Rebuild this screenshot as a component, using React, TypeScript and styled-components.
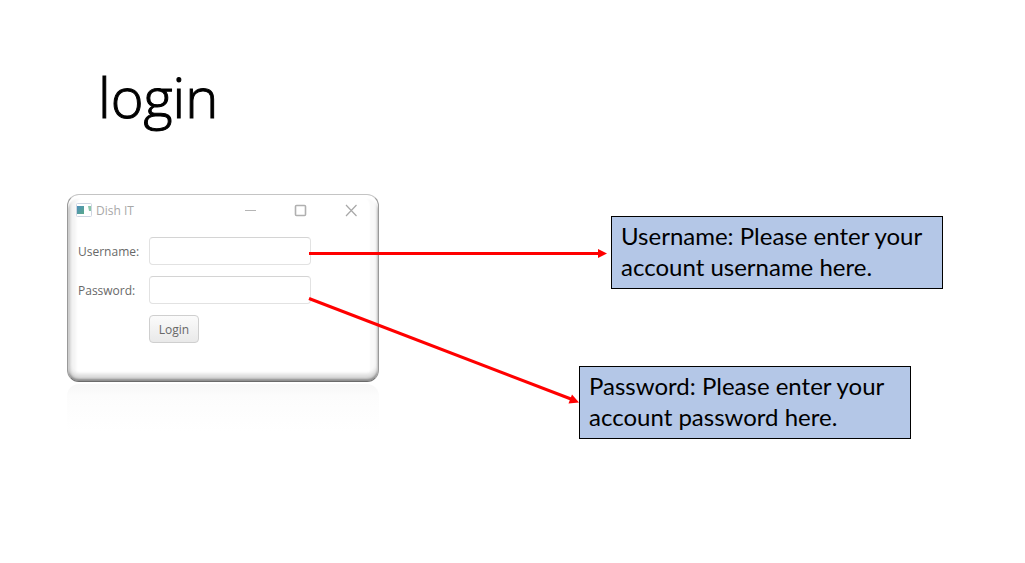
import React from "react";
import styled, { createGlobalStyle } from "styled-components";

const GlobalStyle = createGlobalStyle`
  *, *::before, *::after { box-sizing: border-box; }
  body { margin: 0; background: #fff; color: #000; }
`;

const Slide = styled.main`
  min-height: 100vh;
  padding: 56px 67px 0;
  background: #fff;
`;

const Title = styled.h1`
  margin: 0 0 58px;
  padding-left: 31px;
  font: 300 56px/80px "Open Sans", "Noto Sans", sans-serif;
  -webkit-text-stroke: 1px #000;
`;

const Scene = styled.section`
  position: relative;
  display: flex;
  align-items: flex-start;
  gap: 200px;
`;

const Preview = styled.div`
  flex: none;
  width: 312px;
`;

const AppWindow = styled.div`
  height: 188px;
  border: 1px solid;
  border-color: #c4c4c4 #999 #6b6b6b #999;
  border-radius: 12px;
  background: #fff;
  font-family: "Open Sans", "Noto Sans", sans-serif;
  box-shadow:
    inset 0 4px 2px #fff,
    inset 0 -2px 2px #8e8e8e,
    inset 0 -5px 4px #cfcfcf,
    inset 2px 0 3px #c4c4c4,
    inset -1px 0 1px #c0c0c0,
    inset 0 -8px 3px #f0f0f0,
    inset 8px 0 3px #f4f4f4,
    inset -8px 0 2px #f9f9f9;
`;

const TitleBar = styled.header`
  display: flex;
  align-items: center;
  height: 30px;
  padding: 0 20px 0 8px;
  color: #a8a8a8;
  font-size: 12px;
`;

const WindowName = styled.span`
  flex: 1;
  padding-left: 3px;
`;

const WindowControls = styled.div`
  display: flex;
  gap: 36px;
`;

const WindowButton = styled.button`
  display: flex;
  width: 14px;
  height: 14px;
  padding: 0;
  border: 0;
  background: none;
`;

const LoginForm = styled.form`
  display: grid;
  grid-template-columns: 71px 162px;
  grid-auto-rows: 28px;
  row-gap: 11px;
  align-items: center;
  padding: 12px 0 0 10px;
`;

const Label = styled.label`
  color: #686868;
  font-size: 12px;
`;

const Field = styled.input`
  width: 100%;
  height: 28px;
  padding: 0 8px;
  border: 1px solid #e2e2e2;
  border-top-color: #d4d4d4;
  border-radius: 4px;
  outline: 0;
  background: #fff;
  font: inherit;
`;

const LoginButton = styled.button`
  grid-column: 2;
  justify-self: start;
  width: 50px;
  height: 28px;
  padding: 0;
  border: 1px solid #cfcfcf;
  border-radius: 4px;
  background: linear-gradient(#fbfbfb, #e9e9e9);
  color: #686868;
  font: 12px "Open Sans", "Noto Sans", sans-serif;
`;

const Reflection = styled.div`
  height: 48px;
  margin-top: 2px;
  border-radius: 12px 12px 0 0;
  background: linear-gradient(#f7f7f7, #fcfcfc 12px, #fff);
`;

const Callouts = styled.div`
  display: flex;
  flex-direction: column;
  gap: 77px;
  padding-top: 22px;
`;

const Callout = styled.p<{ $indent?: boolean }>`
  width: 332px;
  margin: 0 0 0 ${({ $indent }) => ($indent ? "32px" : "0")};
  padding: 3px 9px 6px;
  border: 1px solid #000;
  background: #b4c7e7;
  font: 24px/31px Lato, "Open Sans", sans-serif;
`;

const Arrows = styled.svg`
  position: absolute;
  top: 0;
  left: 0;
  pointer-events: none;
`;

export default function App() {
  return (
    <>
      <GlobalStyle />
      <Slide>
        <Title>login</Title>
        <Scene>
          <Preview>
            <AppWindow>
              <TitleBar>
                <svg width="17" height="14" viewBox="0 0 17 14" aria-hidden="true">
                  <defs>
                    <linearGradient id="app-mark" x2="1" y2="1">
                      <stop stopColor="#4f8fbb" />
                      <stop offset="1" stopColor="#58a98a" />
                    </linearGradient>
                  </defs>
                  <rect x=".5" y=".5" width="15" height="13" rx="1" fill="#fff" stroke="#cdd5e2" />
                  <rect x="1" y="3" width="7" height="8" fill="url(#app-mark)" />
                  <path d="M12 3h3v5h-2z" fill="#8cc7ab" />
                </svg>
                <WindowName>Dish IT</WindowName>
                <WindowControls>
                  <WindowButton type="button" aria-label="Minimize">
                    <svg width="14" height="14"><path d="M1 7.500h11" stroke="#b5b5b5" /></svg>
                  </WindowButton>
                  <WindowButton type="button" aria-label="Maximize">
                    <svg width="14" height="14"><rect x="1.500" y="2.500" width="10" height="10" rx="1" fill="none" stroke="#b0b0b0" strokeWidth="1.600" /></svg>
                  </WindowButton>
                  <WindowButton type="button" aria-label="Close">
                    <svg width="14" height="14"><path d="M2 2l10.500 11M12.500 2L2 13" stroke="#a8a8a8" strokeWidth="1.200" /></svg>
                  </WindowButton>
                </WindowControls>
              </TitleBar>
              <LoginForm onSubmit={(e) => e.preventDefault()}>
                <Label htmlFor="username">Username:</Label>
                <Field id="username" type="text" />
                <Label htmlFor="password">Password:</Label>
                <Field id="password" type="password" />
                <LoginButton type="submit">Login</LoginButton>
              </LoginForm>
            </AppWindow>
            <Reflection />
          </Preview>
          <Callouts>
            <Callout $indent>Username: Please enter your account username here.</Callout>
            <Callout>Password: Please enter your account password here.</Callout>
          </Callouts>
          <Arrows width="544" height="240" aria-hidden="true">
            <g stroke="#f00" strokeWidth="3">
              <path d="M242 59.500H532" />
              <path d="M242 104.500L504 205" />
            </g>
            <g fill="#f00">
              <path d="M540 59.500l-9-4.500v9z" />
              <path d="M512 208.500l-10.500 1 3.500-9z" />
            </g>
          </Arrows>
        </Scene>
      </Slide>
    </>
  );
}
